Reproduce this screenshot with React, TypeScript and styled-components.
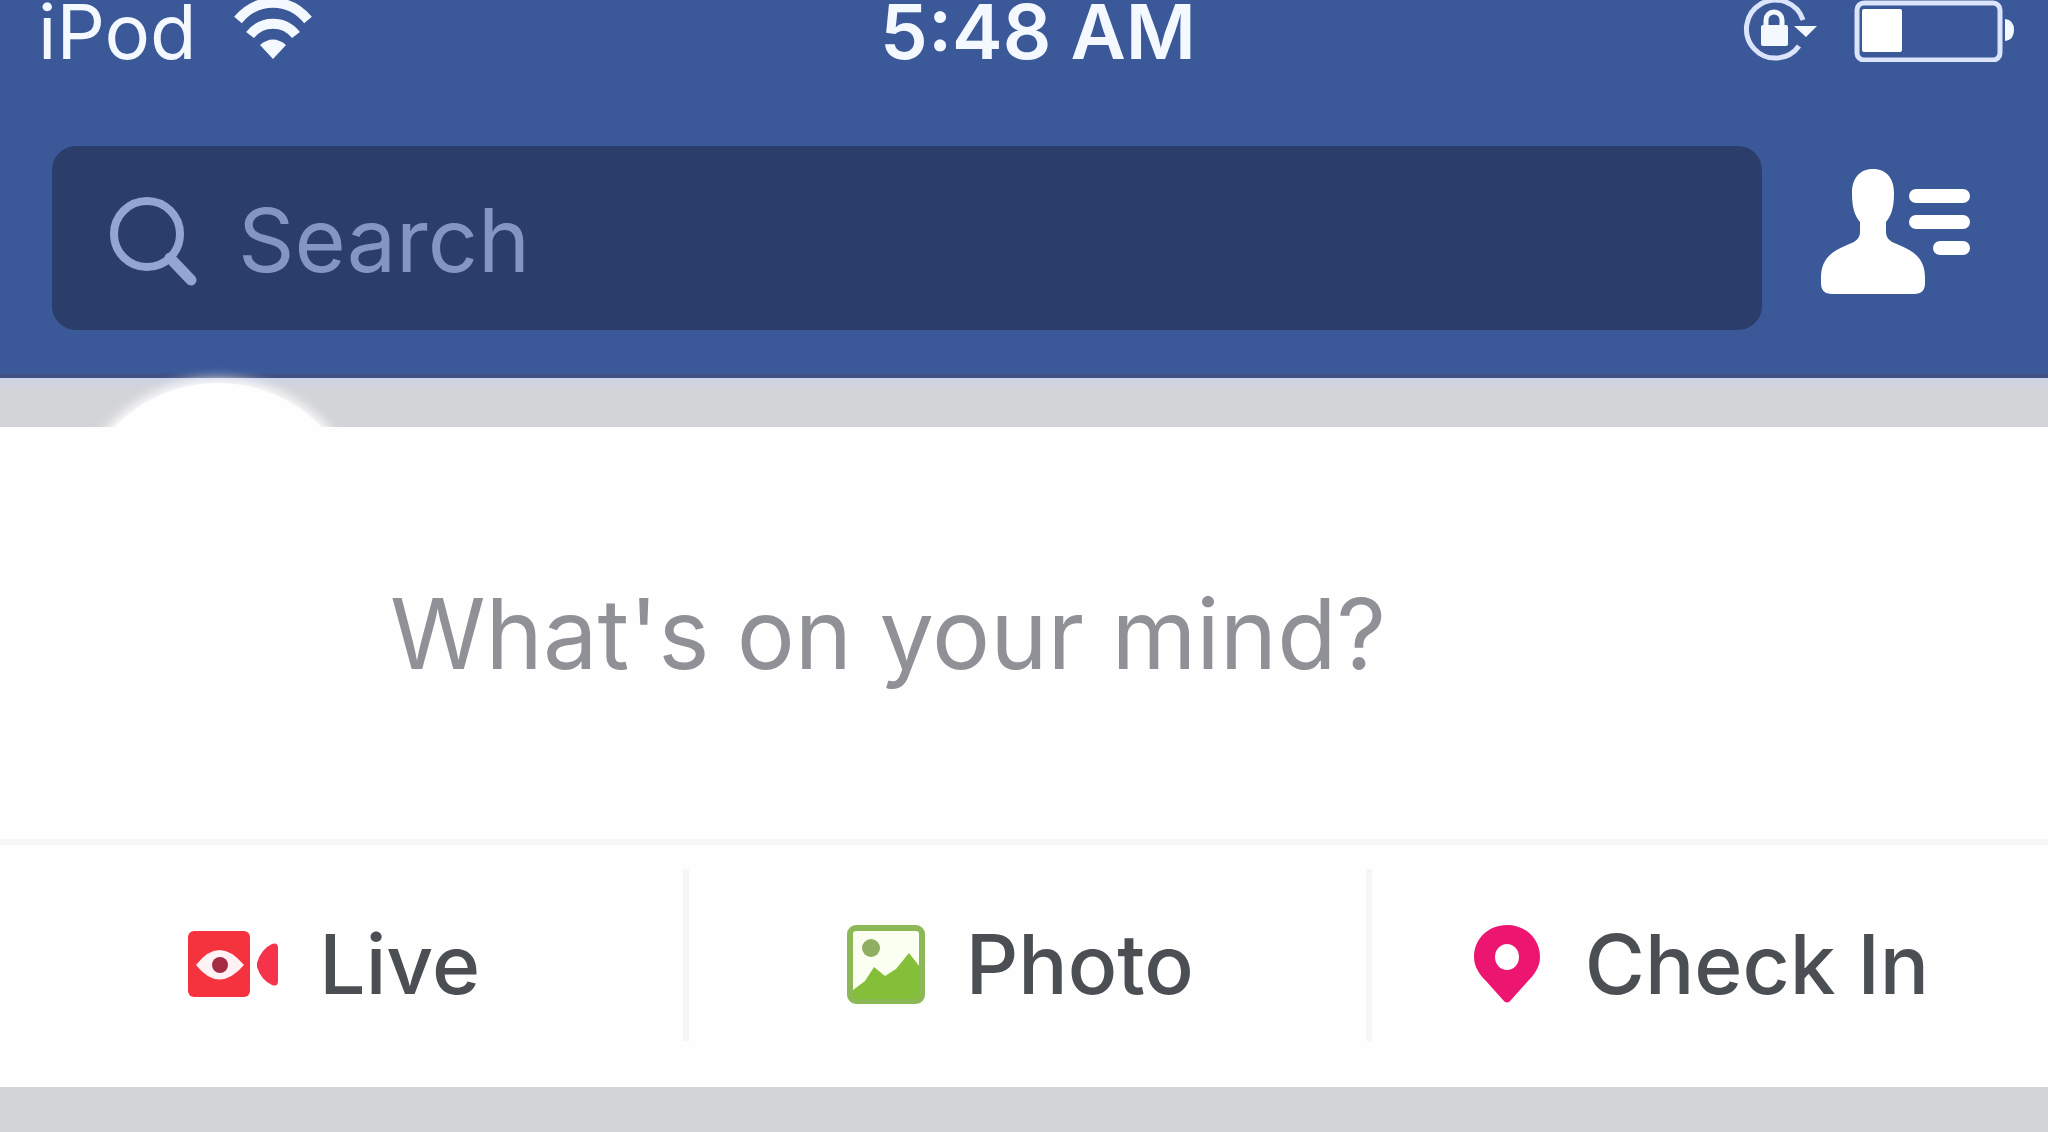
import React from "react";
import styled, { createGlobalStyle } from "styled-components";

const GlobalStyle = createGlobalStyle`
  *, *::before, *::after { box-sizing: border-box; }
  body {
    margin: 0;
    background: #d3d4d8;
    font-family: Inter, "Liberation Sans", Arial, sans-serif;
  }
  button, input { font: inherit; }
`;

const Page = styled.div`
  display: flex;
  flex-direction: column;
`;

const Header = styled.header`
  background: #3b5998;
  padding-bottom: 44px;
  border-bottom: 4px solid #3f5183;
`;

const StatusBar = styled.div`
  display: grid;
  grid-template-columns: 1fr auto 1fr;
  align-items: center;
  height: 62px;
  padding: 0 34px 0 38px;
  color: #f4f8ff;
  line-height: 62px;
  white-space: nowrap;
`;

const StatusGroup = styled.div<{ $end?: boolean }>`
  display: flex;
  align-items: center;
  justify-content: ${(p) => (p.$end ? "flex-end" : "flex-start")};
  gap: 36px;
`;

const Carrier = styled.span`
  font-size: 76px;
`;

const Clock = styled.time`
  padding-left: 24px;
  font-size: 76px;
  font-weight: 600;
`;

const SearchRow = styled.div`
  display: flex;
  align-items: center;
  gap: 58px;
  padding: 84px 76px 0 52px;
`;

const SearchBox = styled.label`
  display: flex;
  flex: 1;
  align-items: center;
  gap: 38px;
  min-width: 0;
  height: 184px;
  padding: 4px 56px 0;
  border-radius: 24px;
  background: #2b3d69;
`;

const SearchInput = styled.input`
  flex: 1;
  min-width: 0;
  padding: 0;
  border: 0;
  outline: 0;
  background: transparent;
  color: #ffffff;
  font-size: 88px;
  &::placeholder { color: #8495c3; opacity: 1; }
`;

const IconButton = styled.button`
  display: flex;
  padding: 0;
  border: 0;
  background: transparent;
  color: #ffffff;
`;

const Card = styled.main`
  position: relative;
  margin-top: 49px;
  background: #fefefe;
`;

const Shade = styled.div`
  height: 12px;
  margin-bottom: -12px;
  background: linear-gradient(#ccd3e9, #d3d4d8);
`;

const Avatar = styled.div`
  position: absolute;
  top: -44px;
  left: 74px;
  width: 288px;
  height: 288px;
  border-radius: 50%;
  background: #fefefe;
  box-shadow: 0 0 12px 4px #fefefe;
`;

const Composer = styled.div`
  position: relative;
  display: flex;
  align-items: center;
  height: 412px;
  padding: 0 64px 0 390px;
`;

const ComposerInput = styled.input`
  width: 100%;
  padding: 0;
  border: 0;
  outline: 0;
  background: transparent;
  color: #4b4f56;
  font-size: 97px;
  &::placeholder { color: #8f9197; opacity: 1; }
`;

const Actions = styled.div`
  display: grid;
  grid-template-columns: 102fr 101fr 100fr;
  border-top: 6px solid #f7f7f7;
  padding: 24px 0 46px;
`;

const Action = styled.button`
  display: flex;
  align-items: center;
  justify-content: center;
  gap: 40px;
  height: 172px;
  padding: 18px 16px 0 0;
  border: 0;
  border-right: 6px solid #f6f6f6;
  background: transparent;
  color: #4b4f54;
  font-size: 82px;
  font-weight: 500;
  white-space: nowrap;
  &:last-child { border-right-color: transparent; }
`;

const WifiIcon = () => (
  <svg width="80" height="62" viewBox="0 0 80 62" fill="none" aria-hidden="true">
    <path d="M5 20C24-3 56-3 75 20" stroke="currentColor" strokeWidth="10" />
    <path d="M17 35C29 20 51 20 63 35" stroke="currentColor" strokeWidth="10" />
    <path d="M27 45Q40 34 53 45L40 59Z" fill="currentColor" />
  </svg>
);

const LockIcon = () => (
  <svg width="76" height="62" viewBox="0 0 76 62" fill="none" aria-hidden="true">
    <path d="M61 20A29 29 0 1 0 57 46" stroke="#dbe4fb" strokeWidth="5" />
    <path d="M52 26H75L64 37Z" fill="currentColor" />
    <path d="M24 26V20a8 8 0 0 1 16 0V26" stroke="currentColor" strokeWidth="5" />
    <rect x="19" y="25" width="27" height="21" rx="2" fill="currentColor" />
  </svg>
);

const BatteryIcon = () => (
  <svg width="160" height="62" viewBox="0 0 160 62" fill="none" aria-hidden="true">
    <rect x="3" y="3" width="143" height="57" rx="7" stroke="#dbe4fb" strokeWidth="5" />
    <rect x="8" y="9" width="40" height="43" rx="2" fill="#ffffff" />
    <path d="M151 19Q160 20 160 30T151 41Z" fill="currentColor" />
  </svg>
);

const SearchIcon = () => (
  <svg width="92" height="92" viewBox="0 0 92 92" fill="none" aria-hidden="true">
    <circle cx="39" cy="40" r="33" stroke="#95a5d3" strokeWidth="8" />
    <path d="M62 64L83 86" stroke="#95a5d3" strokeWidth="11" strokeLinecap="round" />
  </svg>
);

const FriendsIcon = () => (
  <svg width="152" height="140" viewBox="0 0 152 140" fill="currentColor" aria-hidden="true">
    <path d="M53 1C39 1 32 11 32 25C32 38 34 47 40 54V64C40 71 35 74 27 77C10 84 1 92 1 110V115Q1 126 12 126H94Q105 126 105 115V110C105 92 96 84 79 77C71 74 66 71 66 64V54C72 47 74 38 74 25C74 11 67 1 53 1Z" />
    <rect x="89" y="21" width="61" height="14" rx="7" />
    <rect x="89" y="47" width="61" height="14" rx="7" />
    <rect x="113" y="73" width="37" height="14" rx="7" />
  </svg>
);

const LiveIcon = () => (
  <svg width="92" height="68" viewBox="0 0 92 68" aria-hidden="true">
    <rect x="1" y="1" width="62" height="66" rx="6" fill="#f5333f" />
    <path d="M9 35Q32 5 57 35Q32 64 9 35Z" fill="#fff1f4" />
    <circle cx="33" cy="35" r="8" fill="#a52b44" />
    <path d="M70 33Q74 19 85 14Q91 12 91 18V51Q91 57 85 55Q74 50 70 37Z" fill="#f5334b" />
  </svg>
);

const PhotoIcon = () => (
  <svg width="80" height="80" viewBox="0 0 80 80" fill="none" aria-hidden="true">
    <rect x="4" y="4" width="72" height="73" rx="6" fill="#fbfff2" stroke="#8db857" strokeWidth="6" />
    <circle cx="25" cy="24" r="9" fill="#8fae62" />
    <path d="M7 66L19 57L28 43L39 52L50 45L63 29L74 43V75H7Z" fill="#85bf3a" />
  </svg>
);

const PinIcon = () => (
  <svg width="76" height="80" viewBox="0 0 76 80" aria-hidden="true">
    <path
      fillRule="evenodd"
      d="M38 1C19 1 5 15 5 33C5 43 11 51 17 57L34 76Q38 81 42 76L59 57C65 51 71 43 71 33C71 15 57 1 38 1ZM38 20A12 13 0 1 1 38 46A12 13 0 1 1 38 20Z"
      fill="#ec1671"
    />
  </svg>
);

const actions = [
  { label: "Live", Icon: LiveIcon },
  { label: "Photo", Icon: PhotoIcon },
  { label: "Check In", Icon: PinIcon },
];

export default function App() {
  return (
    <Page>
      <GlobalStyle />
      <Header>
        <StatusBar>
          <StatusGroup>
            <Carrier>iPod</Carrier>
            <WifiIcon />
          </StatusGroup>
          <Clock>5:48 AM</Clock>
          <StatusGroup $end>
            <LockIcon />
            <BatteryIcon />
          </StatusGroup>
        </StatusBar>
        <SearchRow>
          <SearchBox>
            <SearchIcon />
            <SearchInput type="text" placeholder="Search" aria-label="Search" />
          </SearchBox>
          <IconButton type="button" aria-label="Friends">
            <FriendsIcon />
          </IconButton>
        </SearchRow>
      </Header>
      <Shade />
      <Card>
        <Avatar />
        <Composer>
          <ComposerInput type="text" placeholder="What's on your mind?" aria-label="What's on your mind?" />
        </Composer>
        <Actions>
          {actions.map(({ label, Icon }) => (
            <Action key={label} type="button">
              <Icon />
              {label}
            </Action>
          ))}
        </Actions>
      </Card>
    </Page>
  );
}
